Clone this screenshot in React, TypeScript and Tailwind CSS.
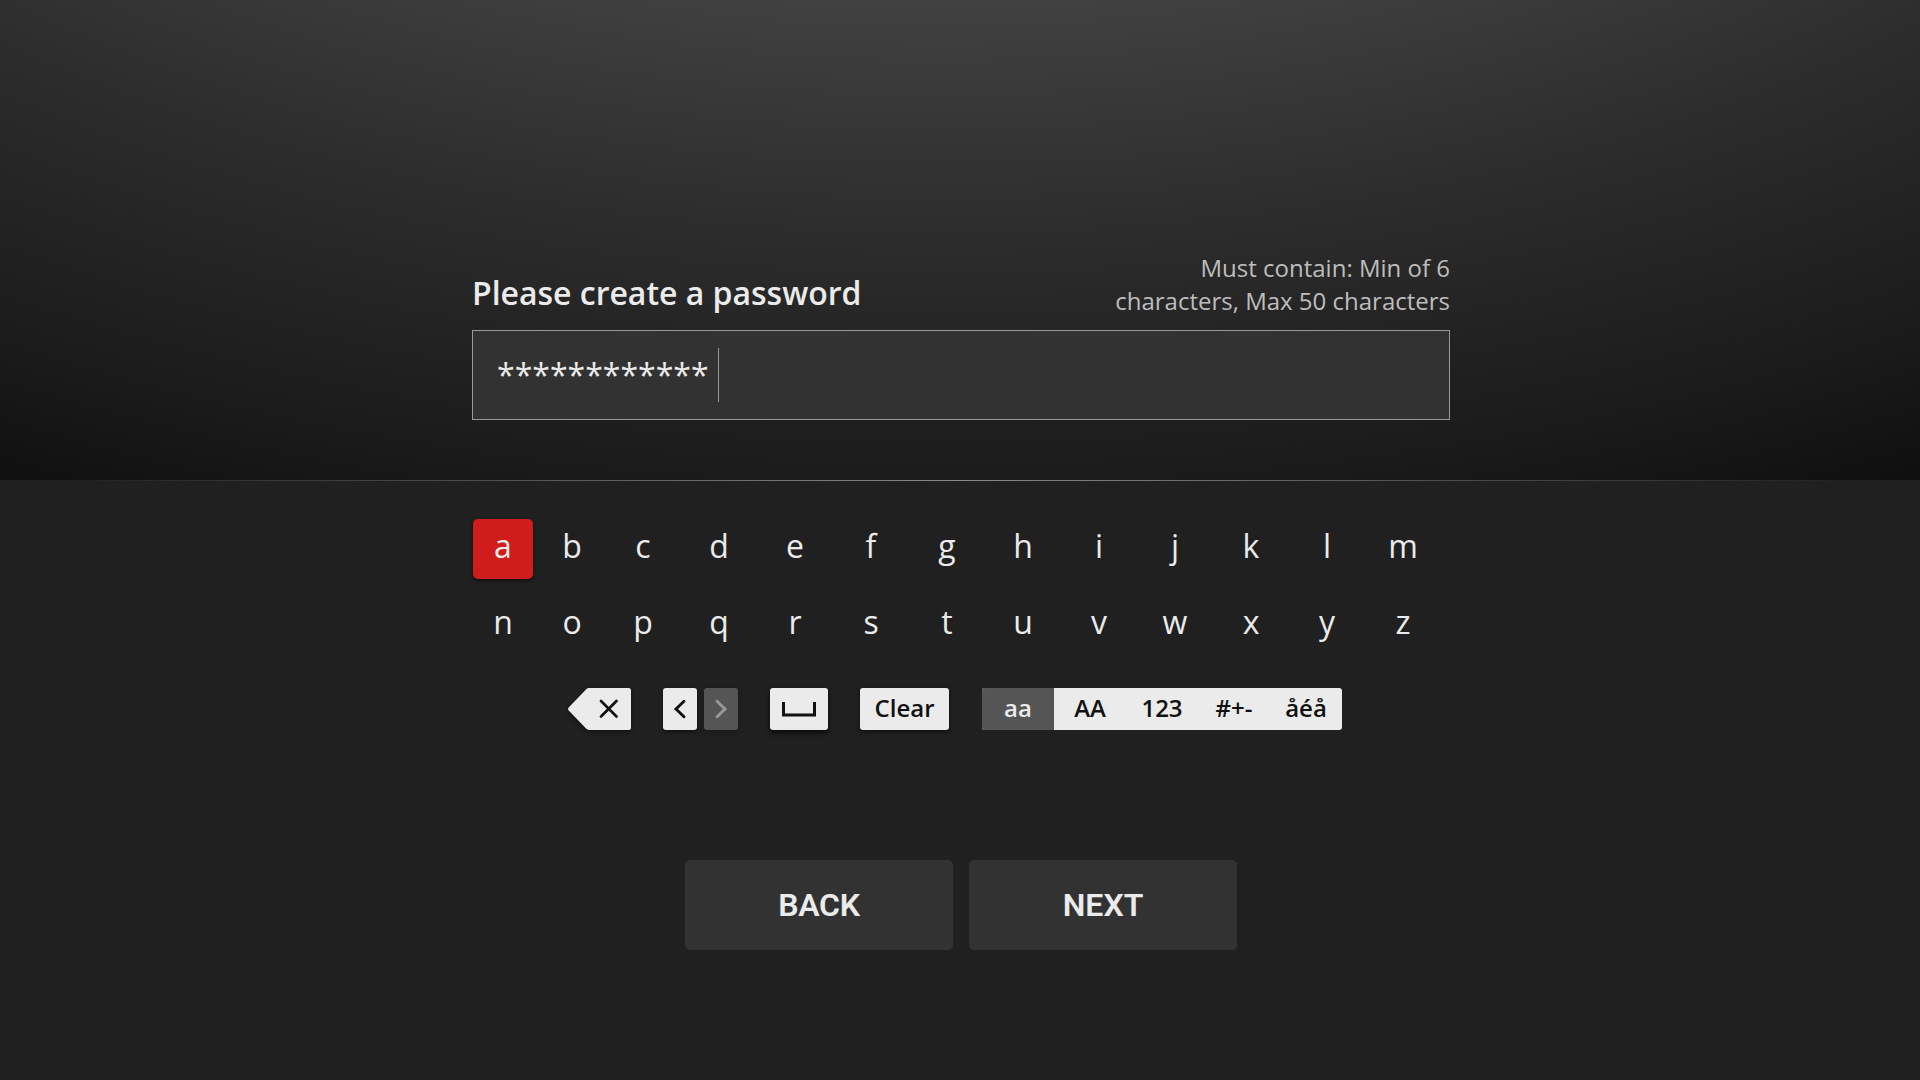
const FIRST_ROW = ['a', 'b', 'c', 'd', 'e', 'f', 'g', 'h', 'i', 'j', 'k', 'l', 'm'];
const SECOND_ROW = ['n', 'o', 'p', 'q', 'r', 's', 't', 'u', 'v', 'w', 'x', 'y', 'z'];
const LAYOUTS = ['aa', 'AA', '123', '#+-', 'åéå'];

const KEY_GRID =
  'grid grid-cols-[69px_71px_repeat(11,76px)] text-[32px] leading-[54px] text-[#ebebeb]';

function KeyRow({ keys, selected }: { keys: string[]; selected?: string }) {
  return (
    <div className={KEY_GRID}>
      {keys.map((key) => (
        <button
          key={key}
          className={
            key === selected
              ? 'size-[60px] rounded-[5px] bg-[#d11c1c] pb-1.5 text-center shadow-[0_2px_4px_rgba(0,0,0,0.5)]'
              : 'size-[60px] pb-1.5 text-center'
          }
        >
          {key}
        </button>
      ))}
    </div>
  );
}

function BackspaceKey() {
  return (
    <button className="h-[42px] w-[63px] drop-shadow-[0_2px_2px_rgba(0,0,0,0.45)]">
      <svg width="63" height="42" viewBox="0 0 63 42" fill="none">
        <path
          d="M21 0H60.5Q63 0 63 2.500V39.500Q63 42 60.500 42H21Q19.500 42 18 40.600L.7 22.400Q-.5 21 .7 19.600L18 1.400Q19.500 0 21 0Z"
          fill="#ebebeb"
        />
        <path d="M33 13L48.500 28.500M48.500 13L33 28.500" stroke="#111" strokeWidth="2.700" strokeLinecap="round" />
      </svg>
    </button>
  );
}

export default function App() {
  return (
    <main className="flex h-[1080px] w-[1920px] flex-col overflow-hidden bg-[#202020] font-['Open_Sans',sans-serif]">
      <section className="flex h-[480px] flex-col items-center bg-[radial-gradient(ellipse_2181px_1300px_at_940px_-683px,#414141_52.5%,#2c2c2c_71%,#1b1b1b_89.5%,#0f0f0f_100%)]">
        <div className="ml-[2px] mt-[251px] w-[978px]">
          <div className="flex h-[79px] justify-between">
            <h1 className="mt-5 text-[32px] font-semibold leading-[44px] tracking-[-0.02px] text-[#ebebeb]">
              Please create a password
            </h1>
            <p className="w-[360px] text-right text-2xl leading-[33px] text-[#bdbdbd]">
              Must contain: Min of 6 characters, Max 50 characters
            </p>
          </div>
          <div className="flex h-[90px] items-center border border-[#999] bg-[#323232] pl-6">
            <span className="text-[32px] leading-[44px] text-[#ebebeb]">************</span>
            <span className="ml-[9px] h-[54px] w-px bg-[#999]" />
          </div>
        </div>
      </section>
      <div className="h-px bg-linear-to-r from-[#202020] from-3% via-[#8a8a8a] to-[#202020] to-97%" />
      <div className="ml-[473px] mt-[38px] flex flex-col gap-4">
        <KeyRow keys={FIRST_ROW} selected="a" />
        <KeyRow keys={SECOND_ROW} />
      </div>
      <div className="ml-[568px] mt-[33px] flex h-[42px] text-2xl font-semibold leading-[40px] text-[#111]">
        <BackspaceKey />
        <button className="ml-8 h-[42px] w-[34px] rounded-[3px] bg-[#ebebeb] shadow-[0_2px_4px_rgba(0,0,0,0.5)]">
          <svg width="34" height="42" fill="none">
            <path d="M21 13.200L13 21L21 28.800" stroke="#111" strokeWidth="2.900" strokeLinecap="round" />
          </svg>
        </button>
        <button className="ml-[7px] h-[42px] w-[34px] rounded-[3px] bg-[#555] shadow-[0_2px_4px_rgba(0,0,0,0.3)]">
          <svg width="34" height="42" fill="none">
            <path d="M13 13.200L21 21L13 28.800" stroke="#999" strokeWidth="2.900" strokeLinecap="round" />
          </svg>
        </button>
        <button className="ml-8 h-[42px] w-[58px] rounded-[3px] bg-[#ebebeb] shadow-[0_3px_5px_rgba(0,0,0,0.7)]">
          <svg width="58" height="42" fill="none">
            <path d="M13.500 14V27H44.500V14" stroke="#111" strokeWidth="3" />
          </svg>
        </button>
        <button className="ml-8 h-[42px] w-[89px] rounded-[3px] bg-[#ebebeb] pb-0.5 shadow-[0_2px_4px_rgba(0,0,0,0.5)]">
          Clear
        </button>
        <div className="ml-[33px] flex h-[42px] overflow-hidden rounded-[3px] bg-[#ebebeb]">
          {LAYOUTS.map((label, index) => (
            <button key={label} className={index === 0 ? 'w-[72px] bg-[#555] pb-0.5 text-[#ebebeb]' : 'w-[72px] pb-0.5'}>
              {label}
            </button>
          ))}
        </div>
      </div>
      <div className="ml-[685px] mt-[130px] flex gap-4 font-['Roboto',sans-serif] text-[32px] font-semibold leading-[90px] text-[#ebebeb]">
        <button className="h-[90px] w-[268px] rounded-[5px] bg-[#323232] tracking-[-0.3px]">BACK</button>
        <button className="h-[90px] w-[268px] rounded-[5px] bg-[#323232]">NEXT</button>
      </div>
    </main>
  );
}
